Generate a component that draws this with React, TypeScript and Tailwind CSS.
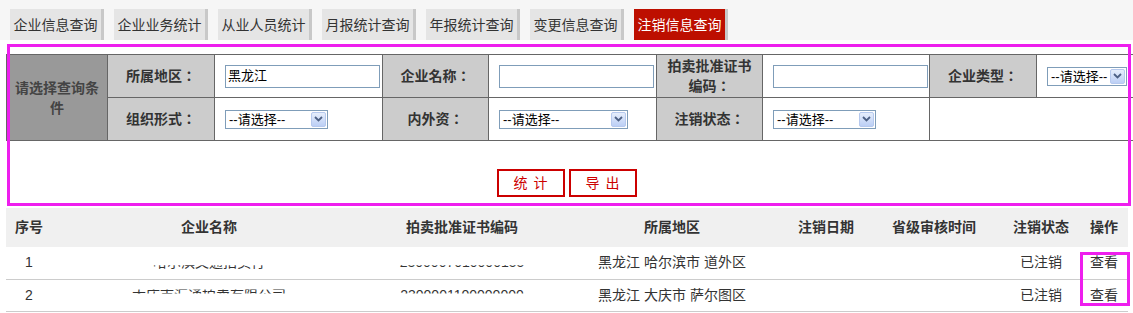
import React from 'react';

const tabs = ['企业信息查询', '企业业务统计', '从业人员统计', '月报统计查询', '年报统计查询', '变更信息查询', '注销信息查询'];

// fake dropdown that looks like the old IE-style select
const Select = ({ width }: { width: string }) => (
    <div className={`${width} h-[19px] border border-[#7f9db9] bg-white flex items-center justify-between pl-[3px] pr-[1px]`}>
        <span className="text-[13px] leading-none text-black">--请选择--</span>
        <span className="w-[15px] h-[15px] rounded-[2px] border border-[#b6c9ee] bg-gradient-to-b from-[#e6eefc] to-[#bccff5] flex items-center justify-center">
            <svg width="9" height="6" viewBox="0 0 9 6">
                <polyline points="1,1 4.5,4.5 8,1" fill="none" stroke="#4d6185" strokeWidth="1.8" />
            </svg>
        </span>
    </div>
);

const TextInput = ({ value }: { value?: string }) => (
    <div className="w-[155px] h-[23px] border border-[#7f9db9] bg-white flex items-center pl-[2px] text-[13px] text-black">
        {value}
    </div>
);

const Label = ({ text }: { text: string }) => (
    <td className="border border-[#666] bg-[#cccccc] text-center font-bold text-[14px] leading-[20px] text-[#333] px-[5px] font-['Liberation_Sans','Noto_Sans_CJK_TC',sans-serif]">
        {text + '：'}
    </td>
);

const rows = [
    { no: '1', name: '哈尔滨文通拍卖行', code: '2300007010000155', area: '黑龙江 哈尔滨市 道外区', clip: '[clip-path:inset(13px_0_0_0)]' },
    { no: '2', name: '大庆市汇通拍卖有限公司', code: '2300001100000000', area: '黑龙江 大庆市 萨尔图区', clip: '[clip-path:inset(5px_0_11px_0)]' },
];

export default function App() {
    return (
        <div className="relative w-[1133px] h-[313px] overflow-hidden bg-white font-['Liberation_Sans','Noto_Sans_CJK_SC',sans-serif] text-[#333]">

            {/* tab strip */}
            <div className="h-[40px] bg-[#f6f6f6] flex gap-[10px] pl-[10px] pt-[9px]">
                {tabs.map((t, i) => (
                    <div
                        key={t}
                        className={`w-[94px] h-[31px] border-r-[3px] border-[#c8c8c8] flex items-center justify-center text-[14px] leading-none ${i === tabs.length - 1 ? 'bg-[#bd0f00] text-white' : 'bg-[#e5e5e5] text-[#333]'}`}
                    >
                        {t}
                    </div>
                ))}
            </div>

            {/* query conditions */}
            <div className="pl-[6px] pt-[14px]">
                <table className="table-fixed border-collapse w-[1134px]">
                    <colgroup>
                        <col className="w-[101px]" />
                        <col className="w-[107px]" />
                        <col className="w-[168px]" />
                        <col className="w-[106px]" />
                        <col className="w-[168px]" />
                        <col className="w-[106px]" />
                        <col className="w-[167px]" />
                        <col className="w-[107px]" />
                        <col className="w-[104px]" />
                    </colgroup>
                    <tbody>
                        <tr className="h-[43px]">
                            <td rowSpan={2} className="border border-[#666] bg-[#999999] text-center font-bold text-[14px] leading-[20px] text-[#444] px-[3px]">
                                请选择查询条件
                            </td>
                            <Label text="所属地区" />
                            <td className="border border-[#666] pl-[10px]"><TextInput value="黑龙江" /></td>
                            <Label text="企业名称" />
                            <td className="border border-[#666] pl-[10px]"><TextInput /></td>
                            <Label text="拍卖批准证书编码" />
                            <td className="border border-[#666] pl-[10px]"><TextInput /></td>
                            <Label text="企业类型" />
                            <td className="border border-[#666] pl-[10px]"><Select width="w-[80px]" /></td>
                        </tr>
                        <tr className="h-[43px]">
                            <Label text="组织形式" />
                            <td className="border border-[#666] pl-[10px]"><Select width="w-[103px]" /></td>
                            <Label text="内外资" />
                            <td className="border border-[#666] pl-[10px]"><Select width="w-[129px]" /></td>
                            <Label text="注销状态" />
                            <td className="border border-[#666] pl-[10px]"><Select width="w-[103px]" /></td>
                            <td colSpan={2} className="border border-[#666]"></td>
                        </tr>
                    </tbody>
                </table>
            </div>

            {/* actions */}
            <div className="h-[67px] flex justify-center items-start gap-[4px] pt-[28px]">
                <button className="w-[68px] h-[28px] border-2 border-[#cc0000] bg-white text-[#cc0000] text-[14px] leading-none tracking-[6px] pl-[6px]">统计</button>
                <button className="w-[68px] h-[28px] border-2 border-[#cc0000] bg-white text-[#cc0000] text-[14px] leading-none tracking-[6px] pl-[6px]">导出</button>
            </div>

            {/* results */}
            <div className="pl-[6px]">
                <table className="table-fixed border-collapse w-[1122px] text-[14px]">
                    <colgroup>
                        <col className="w-[46px]" />
                        <col className="w-[314px]" />
                        <col className="w-[192px]" />
                        <col className="w-[228px]" />
                        <col className="w-[80px]" />
                        <col className="w-[136px]" />
                        <col className="w-[78px]" />
                        <col className="w-[48px]" />
                    </colgroup>
                    <thead>
                        <tr className="h-[39px] bg-[#f0f0f0] font-bold text-[#333]">
                            <th className="font-bold">序号</th>
                            <th className="font-bold">企业名称</th>
                            <th className="font-bold">拍卖批准证书编码</th>
                            <th className="font-bold">所属地区</th>
                            <th className="font-bold">注销日期</th>
                            <th className="font-bold">省级审核时间</th>
                            <th className="font-bold">注销状态</th>
                            <th className="font-bold">操作</th>
                        </tr>
                    </thead>
                    <tbody>
                        {rows.map((r) => (
                            <tr key={r.no} className="h-[32px] border-b border-[#cccccc] text-center text-[#333]">
                                <td>{r.no}</td>
                                <td><span className={`inline-block leading-[20px] ${r.clip}`}>{r.name}</span></td>
                                <td><span className={`inline-block leading-[20px] ${r.clip}`}>{r.code}</span></td>
                                <td>{r.area}</td>
                                <td></td>
                                <td></td>
                                <td>已注销</td>
                                <td>查看</td>
                            </tr>
                        ))}
                    </tbody>
                </table>
            </div>

            {/* magenta highlight boxes drawn over the page */}
            <div className="absolute left-[7px] top-[44px] w-[1124px] h-[162px] border-[3px] border-[#ee1eee] pointer-events-none"></div>
            <div className="absolute left-[1080px] top-[252px] w-[50px] h-[54px] border-[3px] border-[#ee1eee] pointer-events-none"></div>
        </div>
    );
}
